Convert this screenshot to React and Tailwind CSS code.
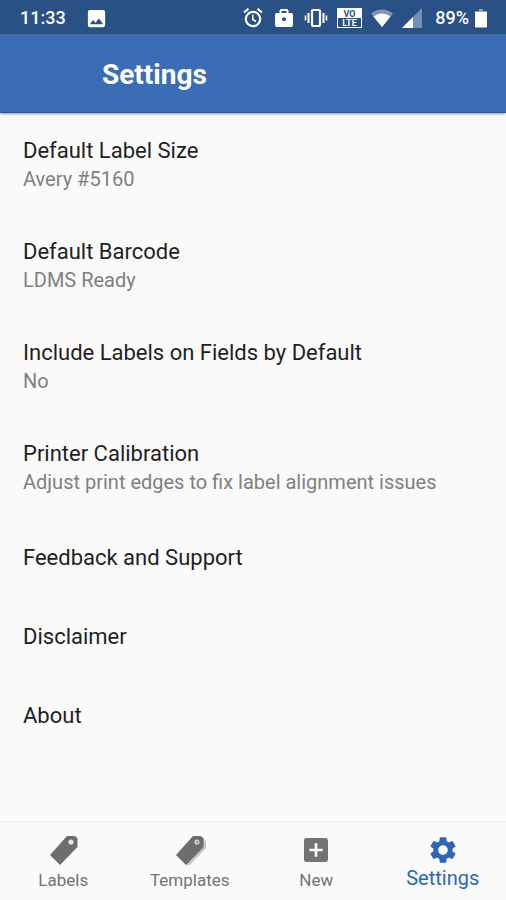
import React from 'react';
import { MdAddBox, MdImage, MdSettings } from 'react-icons/md';

const settings = [
  { title: 'Default Label Size', value: 'Avery #5160' },
  { title: 'Default Barcode', value: 'LDMS Ready' },
  { title: 'Include Labels on Fields by Default', value: 'No' },
  { title: 'Printer Calibration', value: 'Adjust print edges to fix label alignment issues' },
  { title: 'Feedback and Support' },
  { title: 'Disclaimer' },
  { title: 'About' },
];

function TagIcon() {
  return (
    <svg viewBox="0 0 32 32" className="h-8 w-8" aria-hidden="true">
      <path d="M20 2H28L30.500 4.500V13L13 31L3 21Z" fill="#6d6d6d" />
      <circle cx="24" cy="8" r="2.600" fill="#e6e6e6" />
    </svg>
  );
}

function TagStackIcon() {
  return (
    <svg viewBox="0 0 32 32" className="h-8 w-8" aria-hidden="true">
      <path d="M29.500 4.500L32 7V14L15.500 31H12Z" fill="#b8b8b8" />
      <path d="M30.500 5V14L13.500 31" fill="none" stroke="#f0f0f0" strokeWidth="0.600" />
      <path d="M19 2H27L29.500 4.500V13L12 31L2 21Z" fill="#6d6d6d" />
      <circle cx="23" cy="8" r="2.600" fill="#d0d0d0" />
      <circle cx="23.500" cy="8" r="1" fill="#8a8a8a" />
    </svg>
  );
}

function AlarmIcon() {
  return (
    <svg viewBox="0 0 22 22" className="h-[22px] w-[22px]" fill="none" stroke="#fff" aria-hidden="true">
      <circle cx="11" cy="12" r="7.200" strokeWidth="2.200" />
      <path d="M2 5.500L6.500 1.800M20 5.500L15.500 1.800" strokeWidth="2" />
      <path d="M10.800 7.800V12.500L14 14.500" strokeWidth="1.500" />
    </svg>
  );
}

function BriefcaseIcon() {
  return (
    <svg viewBox="0 0 20 20" className="h-5 w-5" fill="#fff" aria-hidden="true">
      <path
        fillRule="evenodd"
        d="M5.500 5V3q0-2 2-2h5q2 0 2 2v2H17q2 0 2 2v10q0 2-2 2H3q-2 0-2-2V7q0-2 2-2ZM7.500 5h5V3h-5ZM9 9.500L8 10.500v1.500L9 13h2l1-1v-1.500L11 9.500Z"
      />
    </svg>
  );
}

function VibrateIcon() {
  return (
    <svg viewBox="0 0 24 20" className="h-5 w-6" fill="none" stroke="#fff" aria-hidden="true">
      <rect x="8" y="2" width="8" height="16" rx="1" strokeWidth="2.200" />
      <path d="M4.500 5V15M19.500 5V15" strokeWidth="2" />
      <path d="M1.500 7.500V12.500M22.500 7.500V12.500" strokeWidth="1.600" />
    </svg>
  );
}

function VolteIcon() {
  return (
    <svg viewBox="0 0 25 20" className="h-5 w-[25px]" aria-hidden="true">
      <rect x="0.500" y="0.500" width="24" height="19" fill="#2a5186" stroke="#fff" />
      <rect x="1" y="1" width="23" height="9" fill="#fff" />
      <text x="12.500" y="9" fontSize="9" fontWeight="700" textAnchor="middle" fill="#2a5186">VO</text>
      <text x="12.500" y="18" fontSize="9" fontWeight="700" textAnchor="middle" fill="#fff">LTE</text>
    </svg>
  );
}

function WifiIcon() {
  return (
    <svg viewBox="0 0 22 18" className="h-[18px] w-[22px]" aria-hidden="true">
      <path d="M0 4.500Q11-3.500 22 4.500L11 18Z" fill="#7f97b7" />
      <path d="M2.500 7.500Q11 1.500 19.500 7.500L11 18Z" fill="#fff" />
    </svg>
  );
}

function SignalIcon() {
  return (
    <svg viewBox="0 0 20 20" className="h-5 w-5" aria-hidden="true">
      <path d="M20 0V20H0Z" fill="#7590b4" />
      <path d="M11 9V20H0Z" fill="#fff" />
    </svg>
  );
}

function BatteryIcon() {
  return (
    <svg viewBox="0 0 12 20" className="h-5 w-3" aria-hidden="true">
      <path d="M4 1H8V3H12V5H0V3H4Z" fill="#8fa5c1" />
      <path d="M0 4H12V18.500Q12 19.500 11 19.500H1Q0 19.500 0 18.500Z" fill="#fff" />
    </svg>
  );
}

const tabs = [
  { label: 'Labels', icon: <TagIcon /> },
  { label: 'Templates', icon: <TagStackIcon /> },
  { label: 'New', icon: <MdAddBox className="h-8 w-8" /> },
  { label: 'Settings', icon: <MdSettings className="h-8 w-8" />, active: true },
];

function StatusBar() {
  return (
    <div className="flex h-[34px] items-center justify-between bg-[#2a5186] pt-0.5 pr-[19px] pl-5 text-lg font-medium text-white">
      <div className="flex items-center gap-[19px]">
        <span>11:33</span>
        <MdImage className="h-[23px] w-[23px]" />
      </div>
      <div className="flex items-center gap-[9px]">
        <div className="flex items-center gap-2.5">
          <AlarmIcon />
          <BriefcaseIcon />
          <VibrateIcon />
        </div>
        <VolteIcon />
        <WifiIcon />
        <SignalIcon />
        <div className="flex items-center gap-1.5 pl-1">
          <span>89%</span>
          <BatteryIcon />
        </div>
      </div>
    </div>
  );
}

export default function App() {
  return (
    <div className="flex min-h-screen flex-col bg-[#fafafa] font-[Roboto,sans-serif]">
      <StatusBar />

      <header className="flex h-[79px] items-center border-b border-[#1f5ba8] bg-[#3a6db5] pt-1 pl-[102px] shadow-sm shadow-black/30">
        <h1 className="text-[28px] font-bold text-white">Settings</h1>
      </header>

      <main className="flex-1 pt-px">
        <ul>
          {settings.map(({ title, value }) => (
            <li key={title}>
              <button
                type="button"
                className={`flex w-full flex-col justify-center px-[23px] text-left ${value ? 'h-[101px]' : 'h-[79px]'}`}
              >
                <span className="text-[22px] leading-[29px] text-[#1f1f1f]">{title}</span>
                {value && <span className="text-xl leading-[29px] text-[#808080]">{value}</span>}
              </button>
            </li>
          ))}
        </ul>
      </main>

      {/* Bottom navigation */}
      <nav className="grid h-[79px] grid-cols-4 border-t border-[#ececec]">
        {tabs.map(({ label, icon, active }) => (
          <button
            key={label}
            type="button"
            aria-current={active ? 'page' : undefined}
            className={`flex flex-col items-center pt-3 ${active ? 'text-xl leading-6 text-[#2c66b8]' : 'text-[17px] leading-7 text-[#737373]'}`}
          >
            {icon}
            <span>{label}</span>
          </button>
        ))}
      </nav>
    </div>
  );
}
